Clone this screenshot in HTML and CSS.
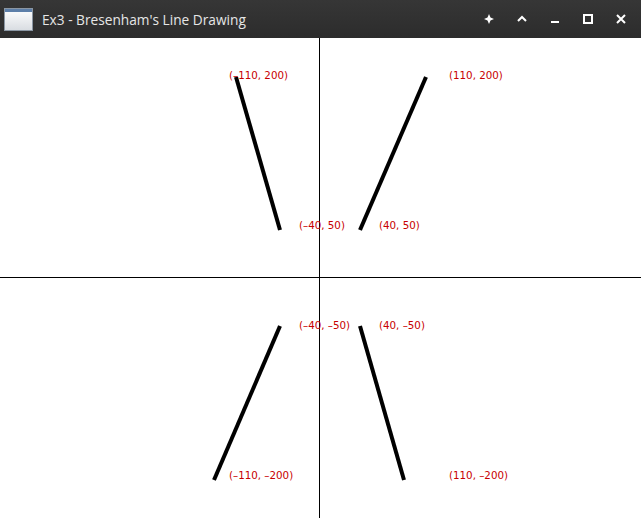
FILE: index.html
```html
<!DOCTYPE html>
<html>
<head>
<meta charset="utf-8">
<link rel="stylesheet" href="styles.css">
</head>
<body>
<div class="window">
  <div class="titlebar">
    <div class="app-icon"><div class="app-icon-top"></div></div>
    <div class="title">Ex3 - Bresenham's Line Drawing</div>
    <div class="controls">
      <svg class="ctl" width="12" height="12" viewBox="0 0 12 12"><path d="M6 1 L7.5 4.5 L11 6 L7.5 7.5 L6 11 L4.5 7.5 L1 6 L4.5 4.5 Z" fill="#fff"/></svg>
      <svg class="ctl" width="12" height="12" viewBox="0 0 12 12"><path d="M2 8 L6 4 L10 8" stroke="#fff" stroke-width="2" fill="none"/></svg>
      <svg class="ctl" width="12" height="12" viewBox="0 0 12 12"><rect x="2" y="8" width="8" height="2" fill="#fff"/></svg>
      <svg class="ctl" width="12" height="12" viewBox="0 0 12 12"><rect x="2" y="2" width="8" height="8" stroke="#fff" stroke-width="2" fill="none"/></svg>
      <svg class="ctl" width="12" height="12" viewBox="0 0 12 12"><path d="M2 2 L10 10 M10 2 L2 10" stroke="#fff" stroke-width="2" fill="none"/></svg>
    </div>
  </div>
  <svg class="canvas" width="641" height="480" viewBox="0 38 641 480">
    <line x1="319.5" y1="38" x2="319.5" y2="518" stroke="#000" stroke-width="1"/>
    <line x1="0" y1="277.5" x2="641" y2="277.5" stroke="#000" stroke-width="1"/>
    <g stroke="#000" stroke-width="4" stroke-linecap="butt">
      <line x1="236" y1="77" x2="280" y2="230"/>
      <line x1="426" y1="77" x2="360" y2="230"/>
      <line x1="280" y1="326" x2="214" y2="480"/>
      <line x1="360" y1="326" x2="404" y2="480"/>
    </g>
    <g class="lbl">
      <text x="229" y="79">(–110, 200)</text>
      <text x="449" y="79">(110, 200)</text>
      <text x="299" y="229">(–40, 50)</text>
      <text x="379" y="229">(40, 50)</text>
      <text x="299" y="329">(–40, –50)</text>
      <text x="379" y="329">(40, –50)</text>
      <text x="229" y="479">(–110, –200)</text>
      <text x="449" y="479">(110, –200)</text>
    </g>
  </svg>
</div>
</body>
</html>
```
FILE: styles.css
```css
html, body {
  margin: 0;
  padding: 0;
  background: #ffffff;
}
.window {
  width: 641px;
  height: 518px;
  display: flex;
  flex-direction: column;
  overflow: hidden;
}
.titlebar {
  height: 38px;
  flex: none;
  background: linear-gradient(#363636, #2c2c2c);
  display: flex;
  align-items: center;
  padding-left: 4px;
  box-sizing: border-box;
}
.app-icon {
  width: 29px;
  height: 23px;
  background: linear-gradient(#ffffff, #d9dde2);
  border: 1px solid #8a96a3;
  box-sizing: border-box;
}
.app-icon-top {
  height: 3px;
  background: #5d7fa9;
}
.title {
  margin-left: 9px;
  font-family: "Open Sans", sans-serif;
  font-size: 13.7px;
  color: #e6e6e6;
  flex: 1;
}
.controls {
  display: flex;
  gap: 21px;
  margin-right: 14px;
  align-items: center;
}
.ctl {
  display: block;
}
.canvas {
  display: block;
  background: #ffffff;
}
.lbl text {
  font-family: "DejaVu Sans", sans-serif;
  font-size: 10.3px;
  fill: #c80000;
}
```
